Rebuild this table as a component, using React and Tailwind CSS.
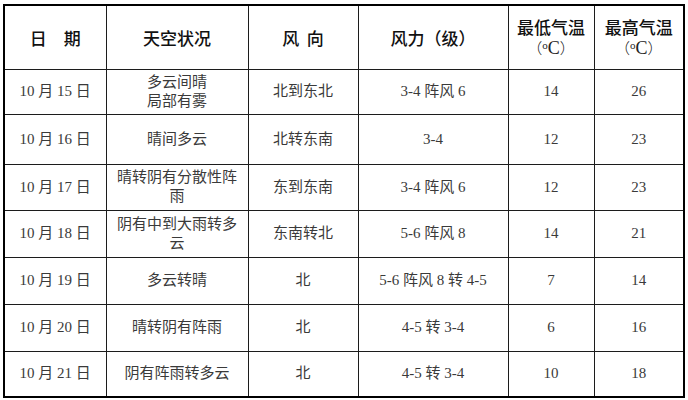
import React from 'react';

const rows = [
  { date: '10 月 15 日', sky: ['多云间晴', '局部有雾'], dir: '北到东北', force: '3-4 阵风 6', low: '14', high: '26', h: 'h-[45px]' },
  { date: '10 月 16 日', sky: ['晴间多云'], dir: '北转东南', force: '3-4', low: '12', high: '23', h: 'h-[50px]' },
  { date: '10 月 17 日', sky: ['晴转阴有分散性阵', '雨'], dir: '东到东南', force: '3-4 阵风 6', low: '12', high: '23', h: 'h-[46px]' },
  { date: '10 月 18 日', sky: ['阴有中到大雨转多', '云'], dir: '东南转北', force: '5-6 阵风 8', low: '14', high: '21', h: 'h-[47px]' },
  { date: '10 月 19 日', sky: ['多云转晴'], dir: '北', force: '5-6 阵风 8 转 4-5', low: '7', high: '14', h: 'h-[47px]' },
  { date: '10 月 20 日', sky: ['晴转阴有阵雨'], dir: '北', force: '4-5 转 3-4', low: '6', high: '16', h: 'h-[47px]' },
  { date: '10 月 21 日', sky: ['阴有阵雨转多云'], dir: '北', force: '4-5 转 3-4', low: '10', high: '18', h: 'h-[46px]' },
];

const th = 'border-[1.5px] border-[#1c1c1c] text-center align-middle font-medium text-[17px] leading-[21px] text-[#111]';
const td = 'border-[1.5px] border-[#1c1c1c] text-center align-middle text-[15px] leading-[19px] text-[#3a3a3a]';

const serif = { fontFamily: '"Liberation Serif", "Noto Sans CJK SC", serif' };

function Unit() {
  return (
    <div className="font-normal text-[18px] leading-[22px] text-[#222]" style={serif}>
      <span className="font-light text-[15px]" style={{ fontFamily: '"Noto Sans CJK SC", sans-serif' }}>（</span>
      <sup className="text-[11px] -top-[5px]">o</sup>C
      <span className="font-light text-[15px]" style={{ fontFamily: '"Noto Sans CJK SC", sans-serif' }}>）</span>
    </div>
  );
}

export default function App() {
  return (
    <div className="w-[688px] h-[400px] bg-white pl-[3px] pt-[4px]" style={serif}>
      <table className="table-fixed border-collapse border-[2.5px] border-black w-[680px]">
        <colgroup>
          <col className="w-[102px]" />
          <col className="w-[142px]" />
          <col className="w-[110px]" />
          <col className="w-[150px]" />
          <col className="w-[86px]" />
          <col className="w-[90px]" />
        </colgroup>
        <thead>
          <tr className="h-[64px]" style={{ fontFamily: '"Noto Sans CJK SC", sans-serif' }}>
            <th className={th}>日　期</th>
            <th className={th}>天空状况</th>
            <th className={th}>风&nbsp;&nbsp;向</th>
            <th className={th}>风力（级）</th>
            <th className={th}>
              最低气温
              <Unit />
            </th>
            <th className={th}>
              最高气温
              <Unit />
            </th>
          </tr>
        </thead>
        <tbody>
          {rows.map((r) => (
            <tr key={r.date} className={r.h}>
              <td className={td}>{r.date}</td>
              <td className={td}>
                {r.sky.map((s) => (
                  <div key={s}>{s}</div>
                ))}
              </td>
              <td className={td}>{r.dir}</td>
              <td className={td}>{r.force}</td>
              <td className={td}>{r.low}</td>
              <td className={td}>{r.high}</td>
            </tr>
          ))}
        </tbody>
      </table>
    </div>
  );
}
